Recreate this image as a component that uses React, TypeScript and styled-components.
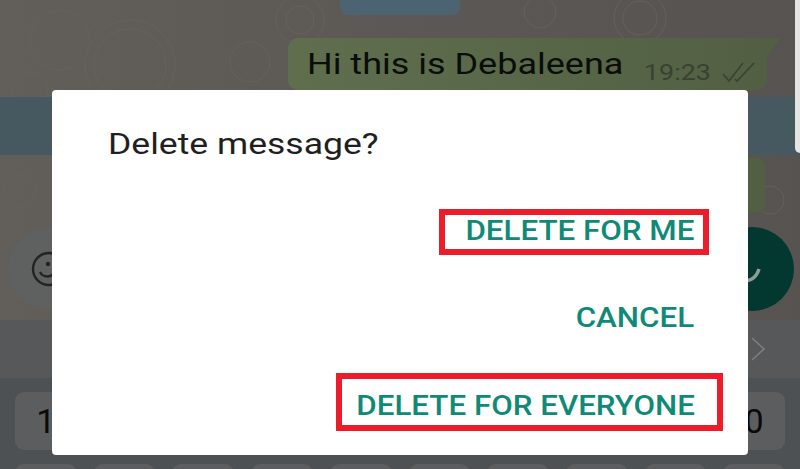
import React from "react";
import styled, { createGlobalStyle } from "styled-components";

const GlobalStyle = createGlobalStyle`
  html, body { margin: 0; padding: 0; background: #4e5153; }
  body { width: 800px; height: 469px; overflow: hidden; font-family: Roboto, "Liberation Sans", sans-serif; }
`;

const Screen = styled.div`
  position: relative;
  display: flex;
  flex-direction: column;
  width: 800px;
  height: 469px;
  overflow: hidden;
`;

const Chat = styled.div`
  position: relative;
  display: flex;
  flex-direction: column;
  flex-shrink: 0;
  height: 320px;
  background: linear-gradient(90deg, #625e5a, #565350);
`;

const Wallpaper = styled.svg`
  position: absolute;
  inset: 0;
  width: 100%;
  height: 100%;
  fill: none;
  stroke: #65615c;
  stroke-width: 1;
`;

const ScrollEdge = styled.div`
  position: absolute;
  top: 0;
  right: 0;
  width: 5px;
  height: 153px;
  background: #e4e4e2;
  border-bottom-left-radius: 5px;
`;

const TopBubble = styled.div`
  position: relative;
  width: 120px;
  height: 15px;
  margin-left: 340px;
  background: #4c6472;
  border-radius: 0 0 8px 8px;
`;

const Bubble = styled.div`
  position: relative;
  display: flex;
  align-items: flex-start;
  box-sizing: border-box;
  width: 479px;
  height: 52px;
  margin: 23px 0 0 288px;
  padding: 8px 0 0 19px;
  background: linear-gradient(90deg, #5f6f4e, #525f43);
  border-radius: 10px 0 10px 10px;

  &::after {
    content: "";
    position: absolute;
    top: 0;
    right: -14px;
    width: 14px;
    height: 18px;
    background: #525f43;
    clip-path: polygon(0 0, 100% 0, 0 100%);
  }
`;

/* the shot is stretched sideways, so the text is too */
const Stretched = styled.span<{ $x: number; $from?: string }>`
  display: inline-block;
  white-space: nowrap;
  transform: scaleX(${(p) => p.$x});
  transform-origin: ${(p) => p.$from || "left"} center;
`;

const MessageText = styled(Stretched)`
  margin-right: 53px;
  font-size: 30px;
  line-height: 36px;
  color: #0a0d08;
`;

const Time = styled(Stretched)`
  margin: 14px 12px 0 20px;
  font-size: 22px;
  line-height: 26px;
  color: #384232;
`;

const Ticks = styled.svg`
  flex-shrink: 0;
  width: 34px;
  height: 22px;
  margin: 15px 0 0 12px;
  fill: none;
  stroke: #384232;
  stroke-width: 1.6;
`;

const SelectedRow = styled.div`
  position: relative;
  height: 58px;
  margin-top: 7px;
  background: #465860;
`;

const SmallBubble = styled.div`
  position: relative;
  width: 200px;
  height: 54px;
  margin: 3px 0 0 565px;
  background: #525f43;
  border-radius: 8px;
`;

const InputRow = styled.div`
  position: relative;
  display: flex;
  align-items: center;
  gap: 10px;
  margin: 15px 0 0 8px;
`;

const InputPill = styled.div`
  display: flex;
  align-items: center;
  box-sizing: border-box;
  width: 692px;
  height: 82px;
  padding-left: 23px;
  background: #5f6161;
  border-radius: 41px;
`;

const SendButton = styled.div`
  display: flex;
  align-items: center;
  justify-content: center;
  width: 84px;
  height: 84px;
  background: #02382f;
  border-radius: 50%;
`;

const Keyboard = styled.div`
  display: flex;
  flex-direction: column;
  flex: 1;
  min-height: 0;
  overflow: hidden;
  background: #4e5153;
`;

const SuggestionBar = styled.div`
  display: flex;
  align-items: center;
  justify-content: flex-end;
  flex-shrink: 0;
  height: 58px;
  padding-right: 34px;
  background: #565859;
`;

const KeyRow = styled.div`
  display: grid;
  flex-shrink: 0;
  grid-template-columns: repeat(10, 1fr);
  gap: 17px;
  padding: 14px 15px 0;
`;

const Key = styled.div<{ $short?: boolean }>`
  display: flex;
  align-items: center;
  justify-content: center;
  height: ${(p) => (p.$short ? "20px" : "58px")};
  background: #5b5d5e;
  border-radius: 9px;
  font-size: 34px;
  color: #0a0a0a;
`;

const Dialog = styled.div`
  position: absolute;
  left: 52px;
  top: 90px;
  display: flex;
  flex-direction: column;
  box-sizing: border-box;
  width: 696px;
  height: 365px;
  padding: 35px 25px 0 56px;
  background: #fff;
  border-radius: 4px;
`;

const Title = styled.h2`
  margin: 0;
  height: 84px;
  font-size: 29.5px;
  line-height: 38px;
  font-weight: 400;
  color: #1f1f1f;
`;

const Actions = styled.div`
  display: flex;
  flex-direction: column;
  align-items: flex-end;
`;

const Action = styled.button<{ $variant: "me" | "cancel" | "everyone" }>`
  display: block;
  box-sizing: border-box;
  margin: ${(p) =>
    p.$variant === "me" ? "0 14px 0 0" : p.$variant === "cancel" ? "43px 29px 35px 0" : "0"};
  padding: ${(p) =>
    p.$variant === "me" ? "0 9px 2px 52px" : p.$variant === "cancel" ? "0" : "7px 22px 0 61px"};
  height: ${(p) => (p.$variant === "me" ? "46px" : p.$variant === "cancel" ? "40px" : "58px")};
  border: ${(p) => (p.$variant === "cancel" ? "none" : "6.5px solid #ed1c2a")};
  background: none;
  font-family: Roboto, "Liberation Sans", sans-serif;
  font-size: 27px;
  font-weight: 500;
  line-height: 30px;
  color: #0f8a76;
`;

const keys = ["1", "", "", "", "", "", "", "", "", "0"];

export default function App() {
  return (
    <Screen>
      <GlobalStyle />
      <Chat>
        <Wallpaper viewBox="0 0 800 320">
          <circle cx="60" cy="40" r="30" />
          <circle cx="130" cy="65" r="45" />
          <circle cx="130" cy="65" r="36" />
          <circle cx="300" cy="20" r="24" />
          <circle cx="300" cy="20" r="14" />
          <circle cx="250" cy="62" r="20" />
          <circle cx="30" cy="90" r="18" />
          <circle cx="640" cy="18" r="26" />
          <circle cx="640" cy="18" r="17" />
          <circle cx="540" cy="12" r="16" />
          <circle cx="770" cy="200" r="14" />
          <circle cx="20" cy="190" r="16" />
        </Wallpaper>
        <TopBubble />
        <Bubble>
          <MessageText $x={1.2}>Hi this is Debaleena</MessageText>
          <Time $x={1.22}>19:23</Time>
          <Ticks viewBox="0 0 34 22">
            <path d="M1 13 L7 20 L21 2" />
            <path d="M13 18 L15 20 L32 2" />
          </Ticks>
        </Bubble>
        <SelectedRow />
        <SmallBubble />
        <InputRow>
          <InputPill>
            <svg width="36" height="36" viewBox="0 0 36 36" fill="none" stroke="#232323" strokeWidth="2.4">
              <circle cx="18" cy="18" r="16" />
              <circle cx="17" cy="13" r="2.2" fill="#232323" stroke="none" />
              <path d="M9 21 C12 27 20 27 24 21" />
            </svg>
          </InputPill>
          <SendButton>
            <svg width="60" height="60" viewBox="0 0 60 60" fill="none" stroke="#8d9c96" strokeWidth="3.5">
              <path d="M18 40 C26 44 34 40 37 30" />
            </svg>
          </SendButton>
        </InputRow>
        <ScrollEdge />
      </Chat>
      <Keyboard>
        <SuggestionBar>
          <svg width="16" height="26" viewBox="0 0 16 26" fill="none" stroke="#7d7f82" strokeWidth="1.6">
            <path d="M2 2 L14 13 L2 24" />
          </svg>
        </SuggestionBar>
        <KeyRow>
          {keys.map((k, i) => (
            <Key key={i}>{k}</Key>
          ))}
        </KeyRow>
        <KeyRow>
          {keys.map((_, i) => (
            <Key key={i} $short />
          ))}
        </KeyRow>
      </Keyboard>
      <Dialog>
        <Title>
          <Stretched $x={1.205}>Delete message?</Stretched>
        </Title>
        <Actions>
          <Action $variant="me">
            <Stretched $x={1.16} $from="right">DELETE FOR ME</Stretched>
          </Action>
          <Action $variant="cancel">
            <Stretched $x={1.16} $from="right">CANCEL</Stretched>
          </Action>
          <Action $variant="everyone">
            <Stretched $x={1.16} $from="right">DELETE FOR EVERYONE</Stretched>
          </Action>
        </Actions>
      </Dialog>
    </Screen>
  );
}
